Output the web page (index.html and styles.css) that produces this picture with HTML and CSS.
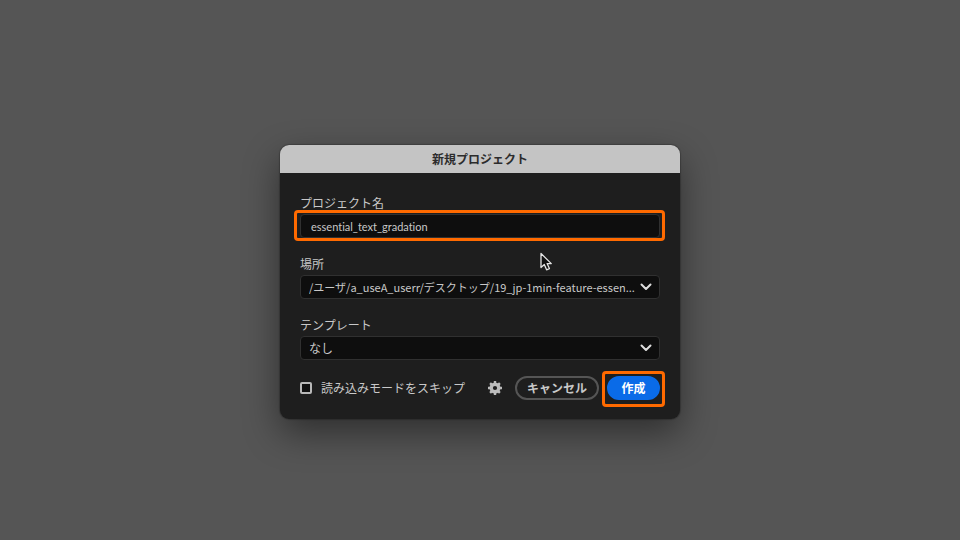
FILE: index.html
```
<!DOCTYPE html>
<html lang="ja">
<head>
    <meta charset="UTF-8">
    <meta name="viewport" content="width=device-width, initial-scale=1.0">
    <title>新規プロジェクト</title>
    <link rel="stylesheet" href="styles.css">
</head>
<body>

    <form class="dialog">
        <h1 class="titlebar">新規プロジェクト</h1>
        <div class="content">
            <div class="field">
                <label for="name">プロジェクト名</label>
                <div class="marked marked-field">
                    <input class="box" type="text" id="name" value="essential_text_gradation" spellcheck="false">
                </div>
            </div>
            <div class="field">
                <label for="place">場所</label>
                <div class="dropdown">
                    <select class="box path" id="place">
                        <option>/ユーザ/a_useA_userr/デスクトップ/19_jp-1min-feature-essen...</option>
                    </select>
                    <svg class="arrow" viewBox="0 0 12 8"><path d="M1.5 1.5 L6 6 L10.5 1.5"/></svg>
                </div>
            </div>
            <div class="field">
                <label for="template">テンプレート</label>
                <div class="dropdown">
                    <select class="box" id="template">
                        <option>なし</option>
                    </select>
                    <svg class="arrow" viewBox="0 0 12 8"><path d="M1.5 1.5 L6 6 L10.5 1.5"/></svg>
                </div>
            </div>
            <div class="footer">
                <label class="skip"><input type="checkbox">読み込みモードをスキップ</label>
                <button class="settings" type="button" aria-label="設定">
                    <svg viewBox="0 0 16 16">
                        <circle class="ring" cx="8" cy="8" r="3.8"/>
                        <path class="teeth" d="M8 1v3M8 12v3M1 8h3M12 8h3M3.1 3.1l2.1 2.1M10.8 10.8l2.1 2.1M3.1 12.9l2.1-2.1M10.8 5.2l2.1-2.1"/>
                    </svg>
                </button>
                <button class="cancel" type="button">キャンセル</button>
                <div class="marked marked-button">
                    <button class="create" type="button">作成</button>
                </div>
            </div>
        </div>
        <svg class="pointer" viewBox="0 0 14 20">
            <path d="M2 1.5v14l3.3-3 2.3 5.3 2.8-1.2-2.3-5h4.2z"/>
        </svg>
    </form>

</body>
</html>
```

FILE: styles.css
```
* {
    box-sizing: border-box;
}
body {
    margin: 0;
    min-height: 100vh;
    padding-top: 24px;
    display: flex;
    justify-content: center;
    align-items: center;
    background: #555555;
    color: #c8c8c8;
    font-family: "Noto Sans CJK JP", sans-serif;
    font-size: 12px;
    line-height: 18px;
}
input, select, button {
    font: inherit;
    color: inherit;
}
.dialog {
    position: relative;
    width: 400px;
    max-width: 100%;
    border-radius: 9px;
    background: #1e1e1e;
    box-shadow: 0 0 1px 1px rgba(0, 0, 0, 0.2), 0 14px 36px rgba(0, 0, 0, 0.45);
}
.titlebar {
    margin: 0;
    padding: 5px 0;
    border-radius: 9px 9px 0 0;
    background: #c4c4c4;
    color: #2c2c2c;
    font-size: 12px;
    font-weight: bold;
    text-align: center;
}
.content {
    display: flex;
    flex-direction: column;
    gap: 16px;
    padding: 20px 20px 19px;
}
.field {
    display: flex;
    flex-direction: column;
    gap: 1px;
    line-height: 20px;
}
.box {
    display: block;
    width: 100%;
    height: 24px;
    padding: 0 8px;
    border: 1px solid #303030;
    border-radius: 4px;
    background: #0e0e0e;
    outline: none;
    appearance: none;
}
.marked-field .box {
    padding: 0 10px;
    font-family: Lato, "Noto Sans CJK JP", sans-serif;
    font-size: 11px;
    font-variant-ligatures: none;
}
.dropdown {
    position: relative;
}
.dropdown .box {
    padding-right: 24px;
}
.dropdown .path {
    font-size: 11px;
}
.arrow {
    position: absolute;
    top: 8px;
    right: 8px;
    width: 12px;
    height: 8px;
    fill: none;
    stroke: #dedede;
    stroke-width: 2;
    stroke-linecap: round;
    stroke-linejoin: round;
    pointer-events: none;
}

/* orange frames */
.marked {
    position: relative;
}
.marked::after {
    content: "";
    position: absolute;
    inset: -4px -5px -3px -6px;
    border: 3px solid #ff6a00;
    border-radius: 4px;
    pointer-events: none;
}
.marked-button::after {
    inset: -5px -5px -7px -5px;
}

.footer {
    display: flex;
    align-items: center;
}
.skip {
    display: flex;
    align-items: center;
    gap: 9px;
    margin-right: auto;
}
.skip input {
    width: 12px;
    height: 12px;
    margin: 0;
    border: 2px solid #b8b8b8;
    border-radius: 2px;
    background: #111111;
    appearance: none;
}
.settings {
    width: 16px;
    height: 16px;
    margin-right: 12px;
    padding: 0;
    border: none;
    background: none;
}
.settings svg {
    display: block;
}
.ring, .teeth {
    fill: none;
    stroke: #bcbcbc;
    stroke-width: 3.4;
}
.teeth {
    stroke-width: 2.4;
}
.cancel, .create {
    display: block;
    height: 24px;
    padding: 0 10px;
    border: 2px solid #555555;
    border-radius: 12px;
    background: none;
    font-weight: bold;
    line-height: 20px;
}
.cancel {
    margin-right: 8px;
}
.create {
    min-width: 53px;
    border-color: #0a6be8;
    background: #0a6be8;
    color: #ffffff;
}
.pointer {
    position: absolute;
    top: 107px;
    left: 259px;
    width: 14px;
    height: 20px;
    fill: #111111;
    stroke: #e4e4e4;
    stroke-width: 1.3;
    stroke-linejoin: round;
}
```
